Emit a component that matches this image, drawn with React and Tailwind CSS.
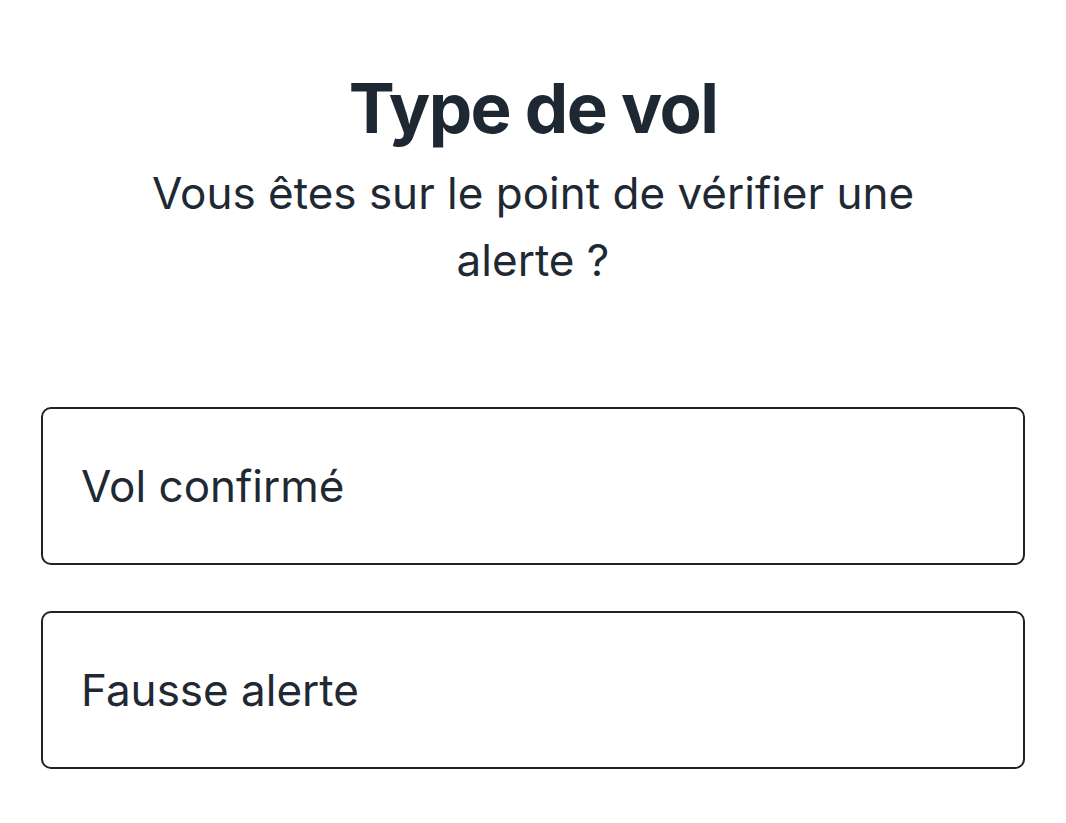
export default function App() {
  const options = ['Vol confirmé', 'Fausse alerte'];

  return (
    <div
      className="min-h-screen bg-white text-[#1f2933] px-[41px] pt-[66px]"
      style={{ fontFamily: 'Inter, "Noto Sans", sans-serif' }}
    >
      <h1 className="text-center text-[69px] font-bold leading-[84px] tracking-[-1.6px] text-[#1e2832]">
        Type de vol
      </h1>
      <p className="mx-auto mt-[10px] max-w-[800px] text-center text-[44px] leading-[67px]">
        Vous êtes sur le point de vérifier une alerte ?
      </p>

      <div className="mt-[113px] flex flex-col gap-[46px]">
        {options.map((label) => (
          <button
            key={label}
            className="flex h-[158px] w-full items-center rounded-[10px] border-2 border-[#222] px-[38px] text-left text-[44px]"
          >
            {label}
          </button>
        ))}
      </div>
    </div>
  );
}
